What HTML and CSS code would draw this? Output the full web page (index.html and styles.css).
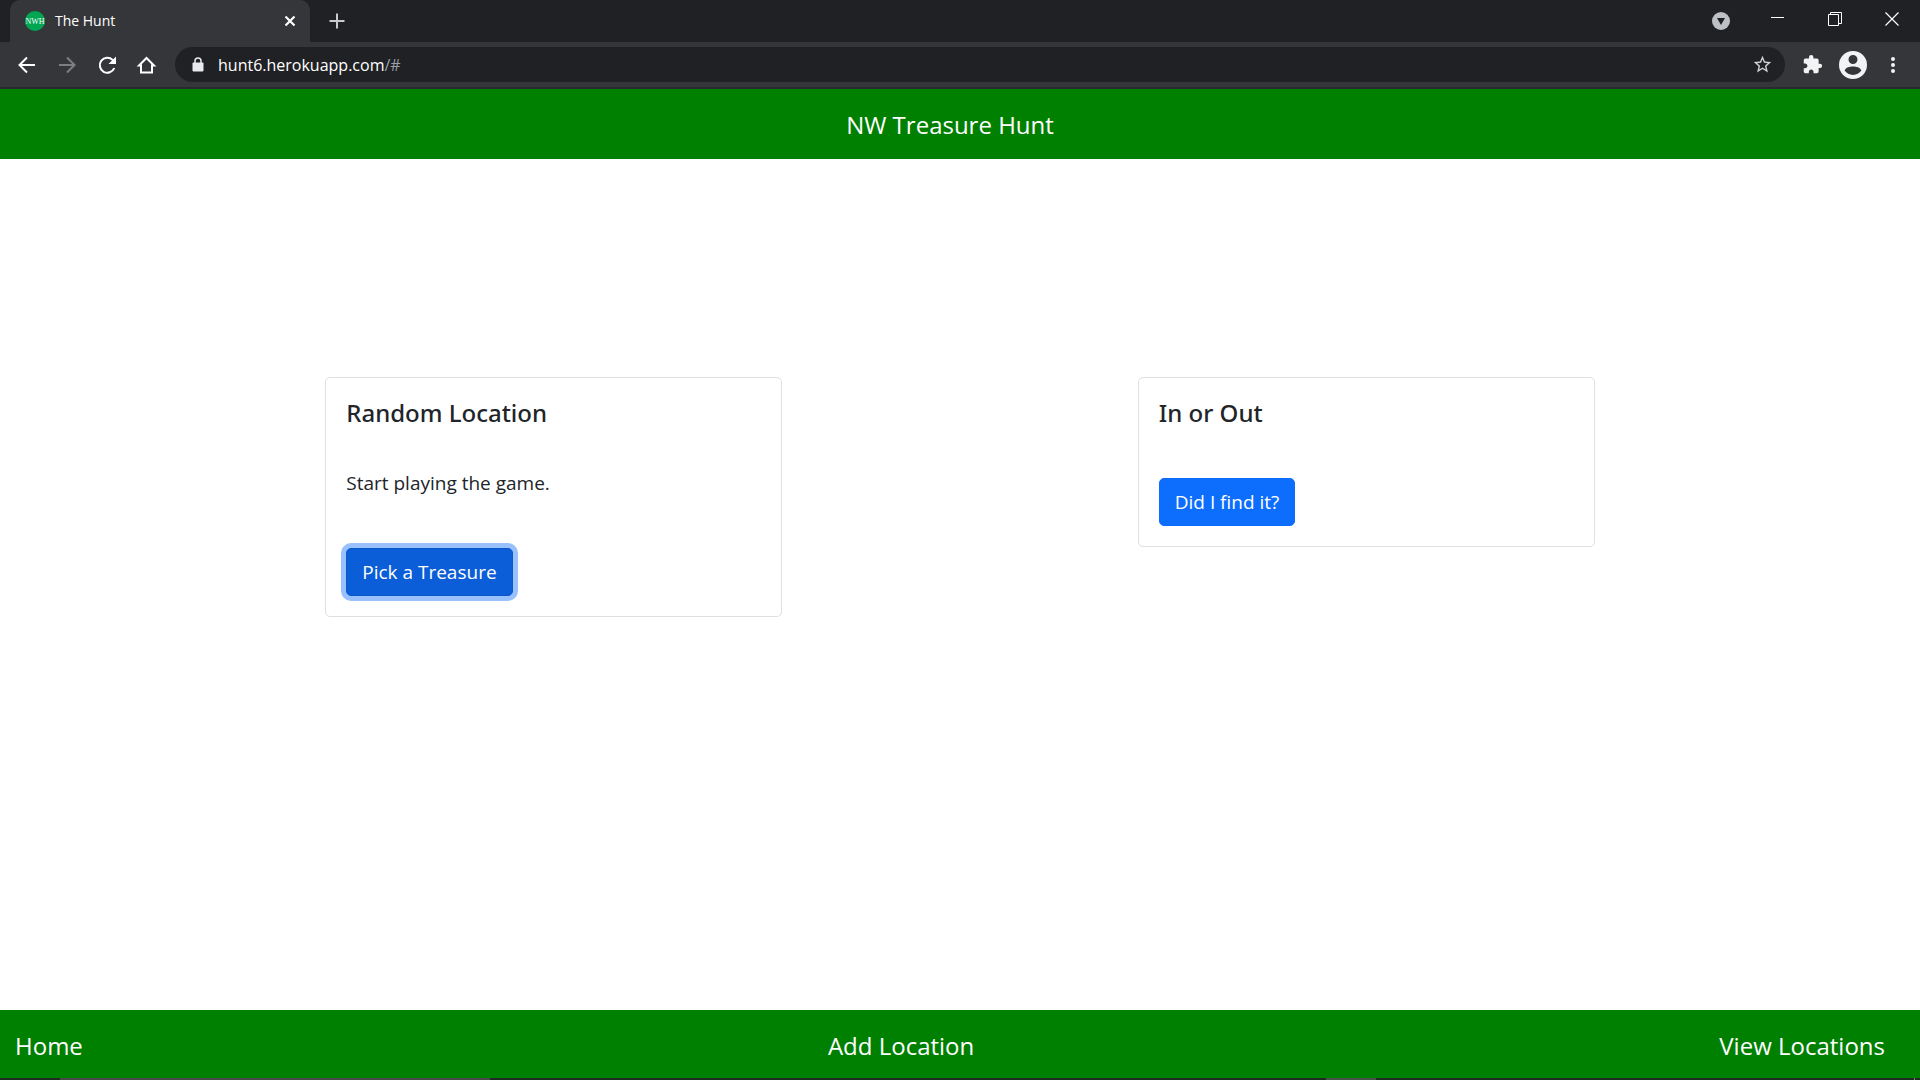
FILE: index.html
```html
<!DOCTYPE html>
<html lang="en">
<head>
<meta charset="utf-8">
<meta name="viewport" content="width=device-width, initial-scale=1">
<title>The Hunt</title>
<link rel="stylesheet" href="styles.css">
</head>
<body>
<div class="browser">
  <div class="tab-strip">
    <div class="tab">
      <svg class="favicon" viewBox="0 0 20 20" aria-hidden="true"><circle cx="10" cy="10" r="10" fill="#00a651"/><text class="favicon-text" x="10" y="13" text-anchor="middle">NWH</text></svg>
      <span class="tab-title">The Hunt</span>
      <button class="icon-button tab-close" type="button" aria-label="Close tab"><svg width="12" height="12" viewBox="0 0 12 12"><path d="M1.500 1.500l9 9M10.500 1.500l-9 9" stroke="#fff" stroke-width="2.200" fill="none"/></svg></button>
    </div>
    <button class="icon-button new-tab" type="button" aria-label="New tab"><svg width="16" height="16" viewBox="0 0 16 16"><path d="M8 .5v15M.5 8h15" stroke="#c8cacd" stroke-width="2" fill="none"/></svg></button>
    <div class="window-controls">
      <button class="icon-button tab-search" type="button" aria-label="Search tabs"><svg width="18" height="18" viewBox="0 0 18 18"><circle cx="9" cy="9" r="9" fill="#bdc1c6"/><path d="M5 6h8l-4 7z" fill="#202124"/></svg></button>
      <button class="icon-button window-button" type="button" aria-label="Minimize"><svg width="14" height="14" viewBox="0 0 14 14"><path d="M0 5.500h13" stroke="#fff" fill="none"/></svg></button>
      <button class="icon-button window-button" type="button" aria-label="Restore"><svg width="14" height="14" viewBox="0 0 14 14"><path d="M.5 2.500h10v11H.5zM2.500 2.500V.5h11v11h-3" stroke="#fff" fill="none"/></svg></button>
      <button class="icon-button window-button" type="button" aria-label="Close"><svg width="14" height="14" viewBox="0 0 14 14"><path d="M.5.5l13 13M13.500.5l-13 13" stroke="#fff" stroke-width="1.200" fill="none"/></svg></button>
    </div>
  </div>
  <div class="toolbar">
    <button class="icon-button nav-button" type="button" aria-label="Back"><svg width="24" height="24" viewBox="0 0 24 24"><path d="M20 12H5M12 4.500L4.500 12l7.500 7.500" stroke="#fff" stroke-width="2" fill="none"/></svg></button>
    <button class="icon-button nav-button" type="button" aria-label="Forward"><svg width="24" height="24" viewBox="0 0 24 24"><path d="M4 12h15M12 4.500l7.500 7.500-7.500 7.500" stroke="#7d7e81" stroke-width="2" fill="none"/></svg></button>
    <button class="icon-button nav-button" type="button" aria-label="Reload"><svg width="24" height="24" viewBox="0 0 24 24"><path d="M19.300 15A7.500 7.500 0 1 1 17.600 6.900l2 2" stroke="#fff" stroke-width="2" fill="none"/><path d="M21 3.500v7.500h-7.500z" fill="#fff"/></svg></button>
    <button class="icon-button nav-button" type="button" aria-label="Home page"><svg width="24" height="24" viewBox="0 0 24 24"><path d="M4 12.500h2V19.500h11V12.500h2L11.500 5z" stroke="#fff" stroke-width="2" fill="none"/></svg></button>
    <div class="address-bar">
      <svg width="12" height="16" viewBox="0 0 12 16" aria-hidden="true"><path d="M3 7V4a3 3 0 0 1 6 0v3" stroke="#e8eaed" stroke-width="1.500" fill="none"/><rect x="0.500" y="5.500" width="11" height="9" rx="1" fill="#e8eaed"/></svg>
      <a class="address" href="#">hunt6.herokuapp.com<span class="address-path">/#</span></a>
      <button class="icon-button" type="button" aria-label="Bookmark this tab"><svg width="21" height="21" viewBox="0 0 24 24"><path d="M22 9.240l-7.190-.62L12 2 9.190 8.630 2 9.240l5.460 4.730L5.820 21 12 17.270 18.180 21l-1.630-7.030L22 9.240zM12 15.400l-3.760 2.270 1-4.280-3.320-2.880 4.380-.38L12 6.100l1.710 4.040 4.380.38-3.320 2.880 1 4.280L12 15.400z" fill="#d0d2d5"/></svg></button>
    </div>
    <div class="toolbar-actions">
      <button class="icon-button" type="button" aria-label="Extensions"><svg width="21" height="21" viewBox="0 0 24 24"><path d="M20.500 11H19V7c0-1.100-.9-2-2-2h-4V3.500a2.500 2.500 0 0 0-5 0V5H4c-1.100 0-1.990.9-1.990 2v3.800H3.500c1.490 0 2.700 1.210 2.700 2.700s-1.210 2.700-2.700 2.700H2V20c0 1.100.9 2 2 2h3.800v-1.500c0-1.490 1.210-2.700 2.700-2.700s2.700 1.210 2.700 2.700V22H17c1.100 0 2-.9 2-2v-4h1.500a2.500 2.500 0 0 0 0-5z" fill="#f1f3f4"/></svg></button>
      <button class="icon-button" type="button" aria-label="Profile"><svg width="28" height="28" viewBox="0 0 28 28"><path fill-rule="evenodd" d="M14 0a14 14 0 1 0 0 28a14 14 0 0 0 0-28zM14 4a4.500 4.500 0 1 1 0 9a4.500 4.500 0 0 1 0-9zM14 24c-3.500 0-6.500-1.700-8.400-4.400C7 16.500 10.500 15.600 14 15.600s7 .9 8.400 4C20.500 22.300 17.500 24 14 24z" fill="#f1f3f4"/></svg></button>
      <button class="icon-button menu-button" type="button" aria-label="Menu"><svg width="4" height="18" viewBox="0 0 4 18"><g fill="#f1f3f4"><circle cx="2" cy="3" r="2"/><circle cx="2" cy="9" r="2"/><circle cx="2" cy="15" r="2"/></g></svg></button>
    </div>
  </div>
</div>

<header class="site-header">NW Treasure Hunt</header>

<main class="cards">
  <section class="card">
    <h1 class="card-title">Random Location</h1>
    <p class="card-text">Start playing the game.</p>
    <button class="button button-active" type="button">Pick a Treasure</button>
  </section>
  <section class="card">
    <h2 class="card-title">In or Out</h2>
    <button class="button" type="button">Did I find it?</button>
  </section>
</main>

<nav class="site-footer" aria-label="Main">
  <a href="#">Home</a>
  <a href="#">Add Location</a>
  <a href="#">View Locations</a>
</nav>
<div class="taskbar"><span class="taskbar-search"></span><span class="taskbar-app"></span><span class="taskbar-desktop"></span></div>
</body>
</html>
```

FILE: styles.css
```css
* {
  box-sizing: border-box;
}

body {
  display: flex;
  flex-direction: column;
  min-height: 100vh;
  margin: 0;
  background: #fff;
  color: #212529;
  font-family: "Open Sans", "Noto Sans", sans-serif;
  font-size: 19px;
  line-height: 30px;
}

a {
  color: inherit;
  text-decoration: none;
}

svg {
  display: block;
}

/* Browser window */
.browser {
  background: #35363a;
  border-bottom: 2px solid #28292c;
}

.tab-strip {
  display: flex;
  height: 42px;
  padding-left: 10px;
  background: #202124;
}

.tab {
  display: flex;
  align-items: center;
  gap: 10px;
  width: 300px;
  padding: 0 14px 0 15px;
  border-radius: 10px 10px 0 0;
  background: #35363a;
  color: #fff;
  font-size: 14px;
}

.tab-title {
  flex: 1;
}

.favicon {
  width: 20px;
  height: 20px;
}

.favicon-text {
  fill: #fff;
  font-family: "Liberation Serif", serif;
  font-size: 8px;
}

.icon-button {
  display: flex;
  align-items: center;
  justify-content: center;
  padding: 0;
  border: 0;
  background: none;
}

.new-tab {
  width: 54px;
}

.window-controls {
  display: flex;
  align-items: flex-start;
  margin-left: auto;
}

.tab-search {
  height: 42px;
  margin-right: 19px;
}

.window-button {
  width: 57px;
  height: 38px;
}

.toolbar {
  display: flex;
  align-items: center;
  height: 45px;
  padding: 0 17px 0 7px;
}

.nav-button {
  width: 40px;
}

.address-bar {
  display: flex;
  flex: 1;
  align-items: center;
  gap: 14px;
  height: 35px;
  margin-left: 8px;
  padding: 0 12px 0 17px;
  border-radius: 18px;
  background: #202124;
  color: #fff;
  font-size: 16px;
}

.address {
  flex: 1;
}

.address-path {
  color: #9aa0a6;
}

.toolbar-actions {
  display: flex;
  align-items: center;
  gap: 16px;
  margin-left: 17px;
}

.menu-button {
  width: 20px;
}

/* Page */
.site-header {
  padding: 21px 20px 19px 0;
  background: #008000;
  color: #fff;
  font-size: 24px;
  text-align: center;
}

.cards {
  display: flex;
  flex: 1;
  flex-wrap: wrap;
  align-items: flex-start;
  justify-content: space-between;
  padding: 218px 325px;
  padding-inline: 16.94%;
}

.card {
  width: 36%;
  padding: 20px;
  border: 1px solid #dfdfdf;
  border-radius: 5px;
}

.card-title {
  margin: 0 0 50px;
  font-family: "Noto Sans", "Open Sans", sans-serif;
  font-size: 24px;
  font-weight: 500;
  line-height: 30px;
}

.card-text {
  margin: -10px 0 50px;
}

.button {
  display: block;
  padding: 8px 15px;
  border: 1px solid #0d6efd;
  border-radius: 5px;
  background: #0d6efd;
  color: #fff;
  font: inherit;
}

.button-active {
  border-color: #0a58ca;
  background: #0b5ed7;
  box-shadow: 0 0 0 5px #98c1fe;
}

.site-footer {
  display: flex;
  justify-content: space-between;
  padding: 21px 35px 17px 15px;
  background: #008000;
  color: #fff;
  font-size: 24px;
}

/* Top edge of the taskbar */
.taskbar {
  display: flex;
  height: 2px;
  padding-left: 60px;
  background: #1c2a20;
}

.taskbar-search {
  width: 430px;
  background: #484848;
}

.taskbar-app {
  width: 50px;
  margin: 0 538px 0 auto;
  background: #46524a;
}

.taskbar-desktop {
  width: 1px;
  margin-right: 5px;
  background: #808580;
}
```
